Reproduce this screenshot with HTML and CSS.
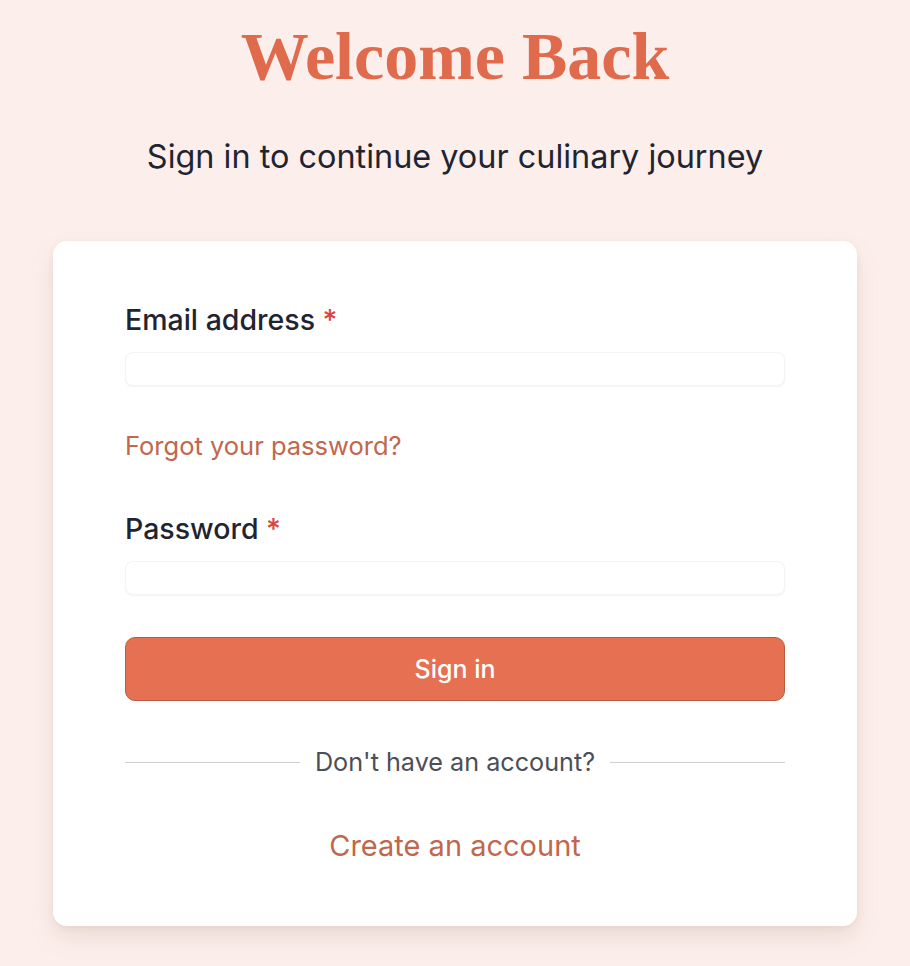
FILE: index.html
```html
<!DOCTYPE html>
<html lang="en">
<head>
    <meta charset="UTF-8">
    <title>Sign in</title>
    <link rel="stylesheet" href="styles.css">
</head>
<body>
    <div class="page">
        <h1 class="title">Welcome Back</h1>
        <p class="subtitle">Sign in to continue your culinary journey</p>

        <div class="card">
            <form class="login-form" onsubmit="return false">
                <div class="field">
                    <label for="email">Email address <span class="req">*</span></label>
                    <input id="email" type="email" class="input">
                </div>

                <a href="#" class="forgot">Forgot your password?</a>

                <div class="field">
                    <label for="password">Password <span class="req">*</span></label>
                    <input id="password" type="password" class="input">
                </div>

                <button type="submit" class="btn-primary">Sign in</button>
            </form>

            <div class="divider">
                <span class="line"></span>
                <span class="divider-text">Don't have an account?</span>
                <span class="line"></span>
            </div>

            <div class="signup">
                <a href="#">Create an account</a>
            </div>
        </div>
    </div>
</body>
</html>
```

FILE: styles.css
```css
body {
    margin: 0;
    background: #fcefeb;
    font-family: Inter, "Noto Sans", sans-serif;
    color: #1f2430;
}

.page {
    max-width: 804px;
    margin: 0 auto;
    padding: 14px 0 40px;
}

.title {
    margin: 0;
    text-align: center;
    font-family: "Liberation Serif", "DejaVu Serif", serif;
    font-weight: 700;
    font-size: 68px;
    line-height: 84px;
    color: #e06a4c;
}

.subtitle {
    margin: 39px 0 0;
    text-align: center;
    font-size: 32.4px;
    line-height: 40px;
    color: #1f2430;
}

.card {
    margin-top: 64px;
    background: #fff;
    border-radius: 14px;
    box-shadow: 0 12px 24px rgba(140, 90, 70, 0.13), 0 2px 6px rgba(140, 90, 70, 0.08);
    padding: 61px 72px 62px;
}

.login-form {
    display: flex;
    flex-direction: column;
}

.field label {
    display: block;
    font-size: 28.5px;
    font-weight: 450;
    line-height: 36px;
    color: #1f2430;
}

.req {
    color: #d9463f;
}

.input {
    display: block;
    box-sizing: border-box;
    width: 100%;
    height: 34px;
    margin-top: 14px;
    border: 1px solid #f6f3f2;
    border-radius: 8px;
    box-shadow: 0 1px 2px rgba(0, 0, 0, 0.05);
    background: #fff;
}

.forgot {
    margin: 44px 0 49px;
    font-size: 25.5px;
    line-height: 32px;
    color: #c0674d;
    text-decoration: none;
}

.btn-primary {
    margin-top: 42px;
    height: 64px;
    border: 1px solid #b85d43;
    border-radius: 10px;
    background: #e57052;
    color: #fff;
    font-family: inherit;
    font-size: 25px;
    font-weight: 500;
    cursor: pointer;
}

.divider {
    display: flex;
    align-items: center;
    gap: 15px;
    margin-top: 45px;
}

.line {
    flex: 1;
    height: 1px;
    background: #cfcfcf;
}

.divider-text {
    font-size: 25.2px;
    line-height: 32px;
    color: #4b4f57;
}

.signup {
    margin-top: 50px;
    text-align: center;
}

.signup a {
    font-size: 29px;
    line-height: 36px;
    color: #c0674d;
    text-decoration: none;
}
```
